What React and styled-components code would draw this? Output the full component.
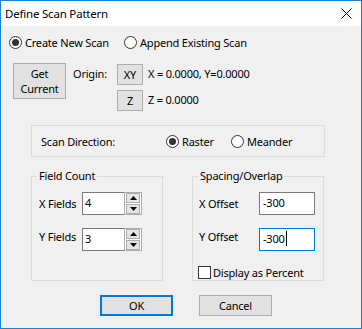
import React from 'react';
import styled, { createGlobalStyle } from 'styled-components';

const GlobalStyle = createGlobalStyle`
  html, body {
    margin: 0;
    padding: 0;
    background: #ffffff;
  }
  body {
    font-family: "Noto Sans", "Segoe UI", sans-serif;
    font-size: 11px;
    letter-spacing: -0.2px;
    color: #000;
  }
`;

const RadioOption = ({ label, checked, width }) => (
  <Option $width={width}>
    <RadioCircle $checked={checked} />
    <span>{label}</span>
  </Option>
);

const Spinner = ({ value }) => (
  <SpinBox>
    <SpinText>{value}</SpinText>
    <SpinButtons>
      <SpinButton>
        <svg width="7" height="4" viewBox="0 0 7 4">
          <path d="M0 4 L3.5 0 L7 4 Z" fill="#000" />
        </svg>
      </SpinButton>
      <SpinButton>
        <svg width="7" height="4" viewBox="0 0 7 4">
          <path d="M0 0 L7 0 L3.5 4 Z" fill="#000" />
        </svg>
      </SpinButton>
    </SpinButtons>
  </SpinBox>
);

const App = () => {
  return (
    <>
      <GlobalStyle />
      <Window>
        <TitleBar>
          <Title>Define Scan Pattern</Title>
          <svg width="11" height="11" viewBox="0 0 11 11">
            <path d="M0.5 0.5 L10.5 10.5 M10.5 0.5 L0.5 10.5" stroke="#000" strokeWidth="1" />
          </svg>
        </TitleBar>

        <Body>
          <RadioRow>
            <RadioOption label="Create New Scan" checked width="115px" />
            <RadioOption label="Append Existing Scan" />
          </RadioRow>

          <OriginRow>
            <GetButton>
              Get
              <br />
              Current
            </GetButton>
            <OriginGrid>
              <OriginLabel>Origin:</OriginLabel>
              <SmallButton>XY</SmallButton>
              <Readout>X = 0.0000, Y=0.0000</Readout>
              <span />
              <SmallButton>Z</SmallButton>
              <Readout>Z = 0.0000</Readout>
            </OriginGrid>
          </OriginRow>

          <DirectionBox>
            <DirectionLabel>Scan Direction:</DirectionLabel>
            <RadioOption label="Raster" checked width="65px" />
            <RadioOption label="Meander" />
          </DirectionBox>

          <GroupRow>
            <Group>
              <Legend>Field Count</Legend>
              <GroupBody $pad="7px">
                <FieldRow $labelWidth="43px">
                  <FieldLabel>X Fields</FieldLabel>
                  <Spinner value="4" />
                </FieldRow>
                <FieldRow $labelWidth="43px">
                  <FieldLabel $lift>Y Fields</FieldLabel>
                  <Spinner value="3" />
                </FieldRow>
              </GroupBody>
            </Group>

            <Group $gap="29px">
              <Legend>Spacing/Overlap</Legend>
              <GroupBody $pad="6px">
                <FieldRow $labelWidth="60px">
                  <FieldLabel>X Offset</FieldLabel>
                  <TextField>-300</TextField>
                </FieldRow>
                <FieldRow $labelWidth="60px">
                  <FieldLabel $lift>Y Offset</FieldLabel>
                  <TextField $focused>
                    -300
                    <Caret />
                  </TextField>
                </FieldRow>
                <CheckRow>
                  <CheckBox />
                  <span>Display as Percent</span>
                </CheckRow>
              </GroupBody>
            </Group>
          </GroupRow>

          <ButtonRow>
            <DialogButton $primary>OK</DialogButton>
            <DialogButton>Cancel</DialogButton>
          </ButtonRow>
        </Body>
      </Window>
    </>
  );
};

const Window = styled.div`
  width: 362px;
  height: 329px;
  box-sizing: border-box;
  border: 1px solid #1883d7;
  background: #f0f0f0;
  display: flex;
  flex-direction: column;
  overflow: hidden;
`;

const TitleBar = styled.div`
  height: 25px;
  flex: none;
  background: #ffffff;
  display: flex;
  align-items: center;
  justify-content: space-between;
  padding: 0 9px 0 4px;
`;

const Title = styled.span`
  font-size: 11.5px;
`;

const Body = styled.div`
  padding: 0 8px;
  display: flex;
  flex-direction: column;
  align-items: flex-start;
`;

const RadioRow = styled.div`
  display: flex;
  align-items: center;
  height: 16px;
  margin-top: 8px;
`;

const Option = styled.label`
  display: flex;
  align-items: center;
  gap: 3px;
  width: ${(props) => props.$width || 'auto'};
  white-space: nowrap;
`;

const RadioCircle = styled.span`
  position: relative;
  width: 13px;
  height: 13px;
  box-sizing: border-box;
  border: 1px solid #333;
  border-radius: 50%;
  background: #fff;
  flex: none;

  &::after {
    content: '';
    display: ${(props) => (props.$checked ? 'block' : 'none')};
    position: absolute;
    inset: 2px;
    border-radius: 50%;
    background: #333;
  }
`;

const OriginRow = styled.div`
  display: flex;
  align-items: flex-start;
  margin-top: 13px;
`;

const ButtonBase = styled.div`
  box-sizing: border-box;
  background: #e1e1e1;
  border: 1px solid #adadad;
  display: flex;
  align-items: center;
  justify-content: center;
  text-align: center;
`;

const GetButton = styled(ButtonBase)`
  width: 53px;
  height: 36px;
  margin-left: 4px;
  line-height: 15px;
`;

const OriginGrid = styled.div`
  display: grid;
  grid-template-columns: 39px 26px auto;
  grid-auto-rows: 21px;
  column-gap: 5px;
  row-gap: 5px;
  margin-left: 7px;
  margin-top: 1px;
  align-items: center;
`;

const OriginLabel = styled.span`
  margin-top: -3px;
`;

const SmallButton = styled(ButtonBase)`
  height: 21px;
`;

const Readout = styled.span`
  margin-top: -3px;
  white-space: nowrap;
`;

const DirectionBox = styled.div`
  width: 294px;
  height: 32px;
  box-sizing: border-box;
  margin-top: 14px;
  margin-left: 22px;
  border: 1px solid #dcdcdc;
  display: flex;
  align-items: center;
  padding-left: 9px;
`;

const DirectionLabel = styled.span`
  width: 125px;
`;

const GroupRow = styled.div`
  display: flex;
  margin-top: 11px;
  margin-left: 22px;
`;

const Group = styled.fieldset`
  width: 132px;
  height: 113px;
  box-sizing: border-box;
  margin: 0 0 0 ${(props) => props.$gap || '0'};
  padding: 8px 0 0 0;
  border: 1px solid #dcdcdc;
  min-width: 0;
`;

const Legend = styled.legend`
  margin-left: 5px;
  padding: 0 2px;
  line-height: 16px;
`;

const GroupBody = styled.div`
  display: flex;
  flex-direction: column;
  gap: 13px;
  padding-left: ${(props) => props.$pad};
`;

const FieldRow = styled.div`
  display: grid;
  grid-template-columns: ${(props) => props.$labelWidth} auto;
  align-items: center;
  height: 23px;
`;

const FieldLabel = styled.span`
  margin-top: ${(props) => (props.$lift ? '-6px' : '0')};
`;

const SpinBox = styled.div`
  display: flex;
  width: 60px;
  height: 23px;
`;

const SpinText = styled.div`
  flex: 1;
  box-sizing: border-box;
  background: #fff;
  border: 1px solid #7a7a7a;
  border-right: none;
  padding: 0 0 3px 2px;
  display: flex;
  align-items: center;
`;

const SpinButtons = styled.div`
  width: 18px;
  box-sizing: border-box;
  background: #fff;
  border: 1px solid #adadad;
  display: flex;
  flex-direction: column;
  gap: 1px;
  padding: 0 1px;
`;

const SpinButton = styled.div`
  flex: 1;
  box-sizing: border-box;
  background: #e5e5e5;
  border: 1px solid #adadad;
  display: flex;
  align-items: center;
  justify-content: center;
`;

const TextField = styled.div`
  width: 56px;
  height: 23px;
  box-sizing: border-box;
  background: #fff;
  border: 1px solid ${(props) => (props.$focused ? '#0078d7' : '#7a7a7a')};
  padding: 0 0 3px 3px;
  display: flex;
  align-items: center;
`;

const Caret = styled.span`
  width: 1px;
  height: 15px;
  background: #000;
  margin-left: 1px;
`;

const CheckRow = styled.label`
  display: flex;
  align-items: center;
  gap: 2px;
  margin-left: -1px;
  margin-top: 1px;
  white-space: nowrap;
`;

const CheckBox = styled.span`
  width: 13px;
  height: 13px;
  box-sizing: border-box;
  border: 1px solid #333;
  background: #fff;
`;

const ButtonRow = styled.div`
  display: flex;
  gap: 26px;
  margin-top: 14px;
  margin-left: 91px;
`;

const DialogButton = styled(ButtonBase)`
  width: 73px;
  height: 21px;
  border: ${(props) => (props.$primary ? '2px solid #0078d7' : '1px solid #adadad')};
`;

export default App;
